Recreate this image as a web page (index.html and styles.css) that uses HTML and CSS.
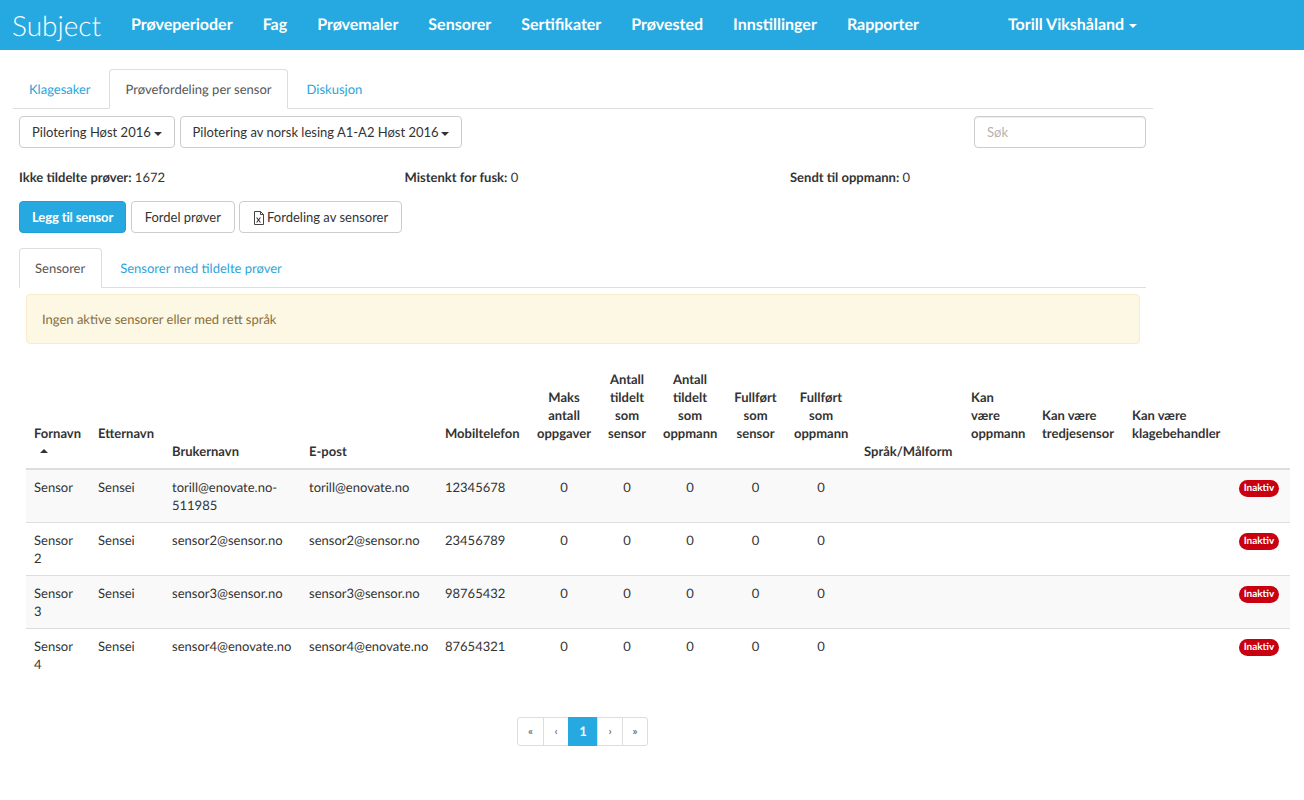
FILE: index.html
```html
<!DOCTYPE html>
<html lang="no">
<head>
<meta charset="utf-8">
<title>Subject</title>
<link rel="stylesheet" href="styles.css">
</head>
<body>
<nav class="navbar">
  <a class="brand" href="#">Subject</a>
  <ul class="nav-links">
    <li><a href="#">Prøveperioder</a></li>
    <li><a href="#">Fag</a></li>
    <li><a href="#">Prøvemaler</a></li>
    <li><a href="#">Sensorer</a></li>
    <li><a href="#">Sertifikater</a></li>
    <li><a href="#">Prøvested</a></li>
    <li><a href="#">Innstillinger</a></li>
    <li><a href="#">Rapporter</a></li>
  </ul>
  <a class="user" href="#">Torill Vikshåland <span class="caret"></span></a>
</nav>
<main class="page">
  <ul class="tabs tabs-outer">
    <li><a href="#">Klagesaker</a></li>
    <li class="active"><a href="#">Prøvefordeling per sensor</a></li>
    <li><a href="#">Diskusjon</a></li>
  </ul>
  <section class="panel">
    <div class="filters">
      <button class="btn">Pilotering Høst 2016 <span class="caret"></span></button>
      <button class="btn">Pilotering av norsk lesing A1-A2 Høst 2016 <span class="caret"></span></button>
      <input class="search" type="text" placeholder="Søk">
    </div>
    <div class="stats">
      <div><b>Ikke tildelte prøver:</b> 1672</div>
      <div><b>Mistenkt for fusk:</b> 0</div>
      <div><b>Sendt til oppmann:</b> 0</div>
    </div>
    <div class="actions">
      <button class="btn btn-primary">Legg til sensor</button>
      <button class="btn btn-wide">Fordel prøver</button>
      <button class="btn btn-wide"><svg class="file-icon" width="12" height="14" viewBox="0 0 12 14" aria-hidden="true"><path d="M1.5.5h6l3 3v10h-9z M7.5.5v3h3" fill="none" stroke="#444" stroke-width="1"/><path d="M3.6 6.5l3.8 5M7.4 6.5l-3.8 5" fill="none" stroke="#333" stroke-width="1.1"/></svg>Fordeling av sensorer</button>
    </div>
    <ul class="tabs tabs-inner">
      <li class="active"><a href="#">Sensorer</a></li>
      <li><a href="#">Sensorer med tildelte prøver</a></li>
    </ul>
    <div class="inner">
      <div class="alert">Ingen aktive sensorer eller med rett språk</div>
      <table class="grid">
        <colgroup>
          <col class="c64"><col class="c74"><col class="c137"><col class="c136"><col class="c92">
          <col class="c70"><col class="c56"><col class="c70"><col class="c61"><col class="c70">
          <col class="c107"><col class="c71"><col class="c90"><col class="c106"><col class="c60">
        </colgroup>
        <thead>
          <tr>
            <th>Fornavn<span class="sort"><span class="caret caret-up"></span></span></th>
            <th>Etternavn<span class="sort"></span></th>
            <th>Brukernavn</th>
            <th>E-post</th>
            <th>Mobiltelefon<span class="sort"></span></th>
            <th class="num">Maks antall oppgaver<span class="sort"></span></th>
            <th class="num">Antall tildelt som sensor<span class="sort"></span></th>
            <th class="num">Antall tildelt som oppmann<span class="sort"></span></th>
            <th class="num">Fullført som sensor<span class="sort"></span></th>
            <th class="num">Fullført som oppmann<span class="sort"></span></th>
            <th>Språk/Målform</th>
            <th>Kan<br>være oppmann<span class="sort"></span></th>
            <th>Kan være tredjesensor<span class="sort"></span></th>
            <th>Kan være klagebehandler<span class="sort"></span></th>
            <th></th>
          </tr>
        </thead>
        <tbody>
          <tr>
            <td>Sensor</td><td>Sensei</td><td>torill@enovate.no-511985</td><td>torill@enovate.no</td><td>12345678</td>
            <td class="num">0</td><td class="num">0</td><td class="num">0</td><td class="num">0</td><td class="num">0</td>
            <td></td><td></td><td></td><td></td><td class="end"><span class="badge">Inaktiv</span></td>
          </tr>
          <tr>
            <td>Sensor 2</td><td>Sensei</td><td>sensor2@sensor.no</td><td>sensor2@sensor.no</td><td>23456789</td>
            <td class="num">0</td><td class="num">0</td><td class="num">0</td><td class="num">0</td><td class="num">0</td>
            <td></td><td></td><td></td><td></td><td class="end"><span class="badge">Inaktiv</span></td>
          </tr>
          <tr>
            <td>Sensor 3</td><td>Sensei</td><td>sensor3@sensor.no</td><td>sensor3@sensor.no</td><td>98765432</td>
            <td class="num">0</td><td class="num">0</td><td class="num">0</td><td class="num">0</td><td class="num">0</td>
            <td></td><td></td><td></td><td></td><td class="end"><span class="badge">Inaktiv</span></td>
          </tr>
          <tr>
            <td>Sensor 4</td><td>Sensei</td><td>sensor4@enovate.no</td><td>sensor4@enovate.no</td><td>87654321</td>
            <td class="num">0</td><td class="num">0</td><td class="num">0</td><td class="num">0</td><td class="num">0</td>
            <td></td><td></td><td></td><td></td><td class="end"><span class="badge">Inaktiv</span></td>
          </tr>
        </tbody>
      </table>
      <ul class="pagination">
        <li><a href="#">«</a></li>
        <li><a href="#">‹</a></li>
        <li class="active"><a href="#">1</a></li>
        <li><a href="#">›</a></li>
        <li><a href="#">»</a></li>
      </ul>
    </div>
  </section>
</main>
</body>
</html>
```
FILE: styles.css
```css
* { box-sizing: border-box; }
html, body { margin: 0; padding: 0; }
body {
  font-family: Lato, "Liberation Sans", sans-serif;
  font-size: 13px;
  line-height: 18px;
  color: #333;
  background: #fff;
  overflow-x: hidden;
  text-rendering: geometricPrecision;
}
a { text-decoration: none; color: inherit; }
ul { list-style: none; margin: 0; padding: 0; }

.navbar {
  height: 50px;
  background: #26a9e0;
  color: #fff;
  display: flex;
  align-items: center;
}
.brand {
  font-size: 28px;
  font-weight: 300;
  margin-left: 12px;
  width: 104px;
  line-height: 50px;
}
.nav-links { display: flex; }
.nav-links li { padding: 0 15px; }
.nav-links a, .user { font-size: 16px; font-weight: 700; line-height: 48px; display: block; }
.user { margin-left: 74px; }
.user .caret { margin-left: 1px; }

.caret {
  display: inline-block;
  width: 0;
  height: 0;
  vertical-align: middle;
  border-top: 4px solid currentColor;
  border-left: 4px solid transparent;
  border-right: 4px solid transparent;
}
.caret-up { border-top: 0; border-bottom: 4px solid currentColor; }

.page { padding: 19px 0 0 13px; width: 1153px; }

.tabs { display: flex; border-bottom: 1px solid #ddd; }
.tabs li { margin-bottom: -1px; }
.tabs li + li { margin-left: 2px; }
.tabs a {
  display: block;
  padding: 9px 15px 11px;
  height: 40px;
  line-height: 20px;
  border: 1px solid transparent;
  border-radius: 4px 4px 0 0;
  color: #2ba4dc;
}
.tabs .active a {
  color: #555;
  background: #fff;
  border-color: #ddd #ddd #fff;
}
.tabs-outer li + li a { padding-left: 16px; }
.tabs-inner { margin-top: 15px; }
.tabs-inner .active a { padding-right: 16px; }

.panel { padding: 7px 7px 0 6px; }
.filters { display: flex; gap: 5px; }
.btn {
  font: inherit;
  height: 32px;
  padding: 0 12px;
  background: #fff;
  color: #333;
  border: 1px solid #ccc;
  border-radius: 4px;
}
.btn .caret { margin-left: -.6px; }
.btn-wide { padding: 0 12.7px; }
.btn-primary {
  background: #26a9e0;
  border-color: #1f9fd6;
  color: #fff;
  font-weight: 700;
  letter-spacing: -.11px;
}
.file-icon { vertical-align: -3px; margin-right: 2px; }
.search {
  font: inherit;
  width: 172px;
  height: 32px;
  margin-left: auto;
  padding: 0 12px;
  border: 1px solid #ccc;
  border-radius: 4px;
  box-shadow: inset 0 1px 1px rgba(0, 0, 0, .075);
}
.search::placeholder { color: #b3b3b3; }

.stats {
  display: grid;
  grid-template-columns: repeat(3, 385.5px);
  width: 1157px;
  margin-top: 20px;
}
.stats b { font-weight: 700; }

.actions { display: flex; gap: 4.8px; margin-top: 15px; }

.inner { padding: 6px 0 0 7px; }
.alert {
  width: 1114px;
  height: 50px;
  padding: 15px;
  background: #fcf8e3;
  border: 1px solid #faebcc;
  border-radius: 4px;
  color: #8a6d3b;
}

.grid {
  table-layout: fixed;
  border-collapse: collapse;
  width: 1264px;
  margin-top: 18px;
}
.c64 { width: 64px; }
.c74 { width: 74px; }
.c137 { width: 137px; }
.c136 { width: 136px; }
.c92 { width: 92px; }
.c70 { width: 70px; }
.c56 { width: 56px; }
.c61 { width: 61px; }
.c107 { width: 107px; }
.c71 { width: 71px; }
.c90 { width: 90px; }
.c106 { width: 106px; }
.c60 { width: 60px; }

.grid th {
  padding: 8px;
  text-align: left;
  vertical-align: bottom;
  font-weight: 700;
  border-bottom: 2px solid #ddd;
}
.grid td {
  padding: 8px;
  vertical-align: top;
  border-top: 1px solid #ddd;
}
.grid tbody tr:first-child td { border-top: 0; }
.grid tbody tr:nth-child(odd) td { background: #f9f9f9; }
.grid .num { text-align: center; }
.grid .end { text-align: right; padding-left: 0; padding-right: 11px; }
.sort { display: block; height: 18px; padding-left: 6px; }
.sort .caret { vertical-align: 3px; }

.badge {
  display: inline-block;
  background: #c9000f;
  color: #fff;
  font-size: 10px;
  font-weight: 700;
  line-height: 17px;
  height: 17px;
  width: 40px;
  text-align: center;
  border-radius: 9px;
  vertical-align: top;
  margin-top: 2px;
}

.pagination {
  display: flex;
  justify-content: center;
  width: 1114px;
  margin-top: 36px;
}
.pagination a {
  display: block;
  height: 29px;
  min-width: 26px;
  padding: 0 9px;
  margin-left: -1px;
  line-height: 27px;
  text-align: center;
  font-size: 11px;
  font-weight: 700;
  color: #777;
  background: #fff;
  border: 1px solid #ddd;
}
.pagination li:first-child a { border-radius: 3px 0 0 3px; min-width: 27px; }
.pagination li:last-child a { border-radius: 0 3px 3px 0; }
.pagination .active a {
  background: #26a9e0;
  border-color: #26a9e0;
  color: #fff;
  font-size: 13px;
  min-width: 30px;
}
```
